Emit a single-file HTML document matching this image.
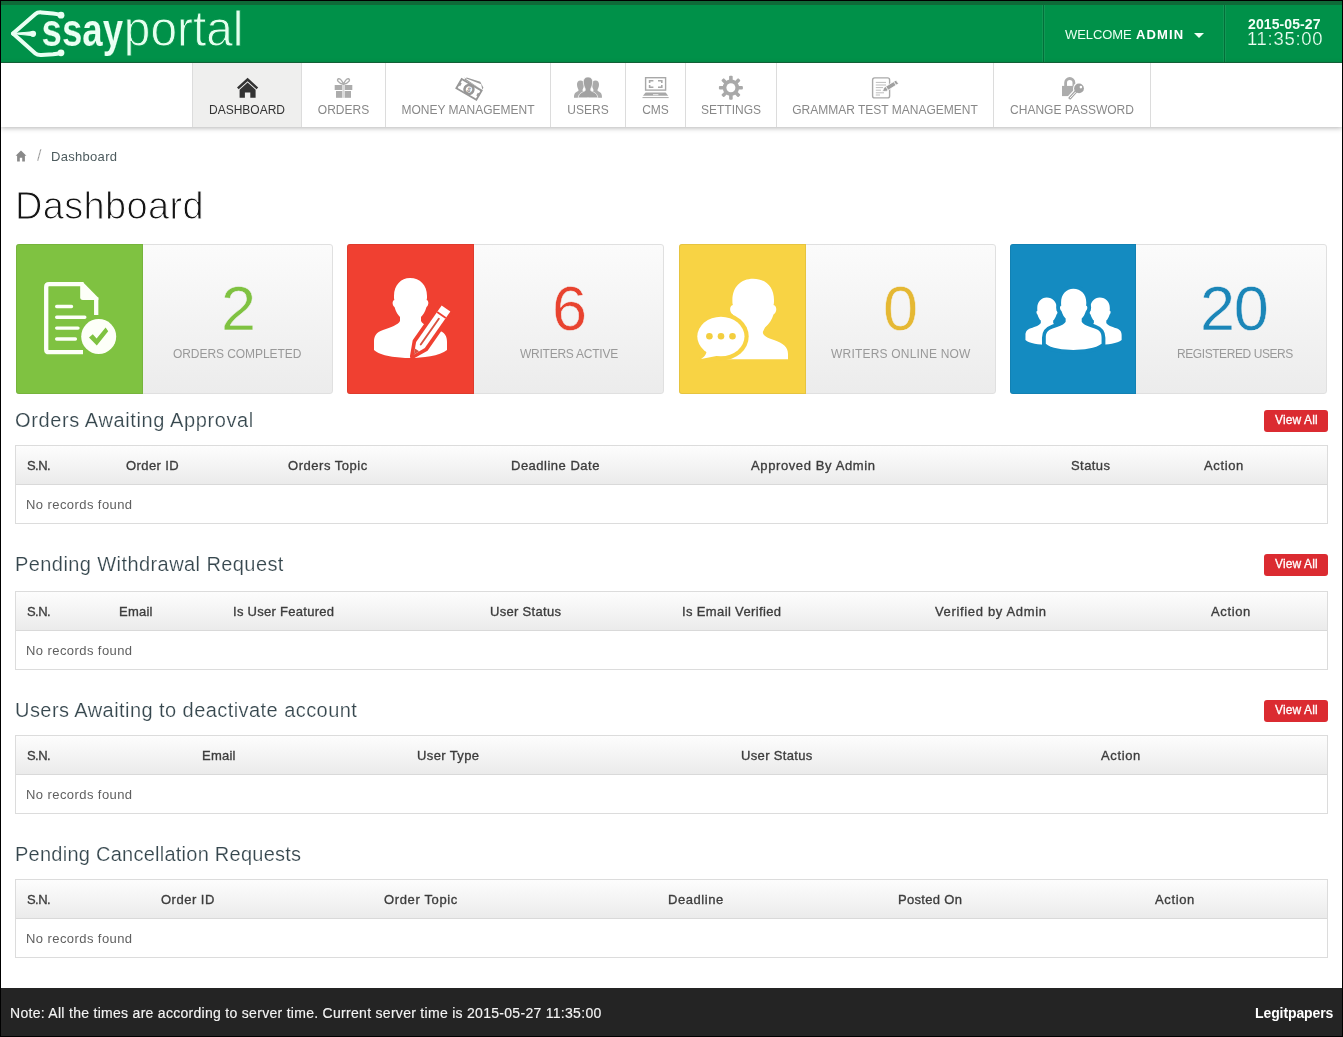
<!DOCTYPE html>
<html lang="en">
<head>
<meta charset="utf-8">
<title>Dashboard - Essay Portal</title>
<style>
html,body{margin:0;padding:0;}
body{width:1343px;height:1037px;position:relative;overflow:hidden;background:#fff;font-family:"Liberation Sans",sans-serif;}
.abs,.t,svg.i{position:absolute;}
.t{white-space:pre;line-height:1;will-change:transform;font-family:"Liberation Sans",sans-serif;}
#frame{left:0;top:0;width:1341px;height:1035px;border:1px solid #000;z-index:50;pointer-events:none;}
#hdr{left:1px;top:1px;width:1341px;height:57px;background:#009149;border-top:4px solid #0f6a38;border-bottom:1px solid #15683c;}
.vsep{top:5px;width:1px;height:57px;background:#02703a;box-shadow:1px 0 0 rgba(255,255,255,.07),-1px 0 0 rgba(255,255,255,.07);}
#nav{left:1px;top:63px;width:1341px;height:64px;background:#fff;box-shadow:0 1px 5px rgba(0,0,0,.3);}
.tab{top:63px;height:64px;border-right:1px solid #dcdcdc;box-sizing:border-box;text-align:center;font-size:12px;line-height:14px;color:#888;}
.tab span{position:absolute;left:0;right:0;top:40px;will-change:transform;}
.tab.on{background:#efefee;color:#333;border-left:1px solid #dcdcdc;}
.card{top:243.5px;width:315px;height:148.5px;border:1px solid #e0e0e0;border-radius:3px;background:linear-gradient(#fbfbfb,#ececec);}
.card i{position:absolute;left:-1px;top:-1px;width:127px;height:150.5px;display:block;border-radius:3px 0 0 3px;box-shadow:inset 0 0 0 1px rgba(0,0,0,.07);}
.btn{left:1264px;width:63.5px;height:22px;border-radius:3px;background:#db2b31;}
.tbl{left:15px;width:1311px;height:77px;border:1px solid #dcdcdc;background:#fff;}
.tbl b{display:block;height:38px;border-bottom:1px solid #d9d9d9;background:linear-gradient(#fdfdfd,#ebebeb);}
#ftr{left:1px;top:988px;width:1341px;height:48px;background:#242424;}
</style>
</head>
<body>
<div id="hdr" class="abs"></div>
<div class="abs vsep" style="left:1043px"></div>
<div class="abs vsep" style="left:1224px"></div>

<!-- logo -->
<svg class="i" style="left:0;top:0;will-change:transform" width="260" height="62" viewBox="0 0 260 62">
  <g fill="none" stroke="#eafff3" stroke-width="4" stroke-linecap="round" stroke-linejoin="round">
    <path d="M13 33.6 L35.4 14 Q37.6 12.1 41.5 12.4 L53 13.4 Q57.5 13.8 60.5 15.2"/>
    <path d="M13 33.6 L35.4 53.4 Q37.6 55.3 41.5 55 L53 54.3 Q57.5 53.9 60.5 52.8"/>
  </g>
  <path d="M12 33.6 L32 31.8 L32 35.6 Z" fill="#eafff3" stroke="#eafff3" stroke-width="1" stroke-linejoin="round"/>
  <circle cx="61" cy="15.2" r="3.4" fill="#eafff3"/>
  <circle cx="61" cy="52.8" r="3.4" fill="#eafff3"/>
  <circle cx="33" cy="33.8" r="3.1" fill="#eafff3"/>
  <text transform="translate(41.6 45.8) scale(.797 1)" font-family="Liberation Sans, sans-serif" font-weight="700" font-size="46" fill="#eafff3" stroke="#009149" stroke-width=".15">ssay</text>
  <text transform="translate(123.8 45.8) scale(.956 1)" font-family="Liberation Sans, sans-serif" font-weight="400" font-size="50" fill="#e4ffee" stroke="#009149" stroke-width=".9">portal</text>
</svg>
<!-- caret -->
<svg class="i" style="left:1194px;top:33px" width="10" height="5" viewBox="0 0 10 5"><path d="M0 0H10L5 5Z" fill="#f0fff6"/></svg>

<div id="nav" class="abs"></div>
<div class="abs tab on" style="left:192px;width:110px"><span>DASHBOARD</span></div>
<div class="abs tab" style="left:302px;width:84px"><span>ORDERS</span></div>
<div class="abs tab" style="left:386px;width:165px"><span>MONEY MANAGEMENT</span></div>
<div class="abs tab" style="left:551px;width:75px"><span>USERS</span></div>
<div class="abs tab" style="left:626px;width:60px"><span>CMS</span></div>
<div class="abs tab" style="left:686px;width:91px"><span>SETTINGS</span></div>
<div class="abs tab" style="left:777px;width:217px"><span>GRAMMAR TEST MANAGEMENT</span></div>
<div class="abs tab" style="left:994px;width:157px"><span>CHANGE PASSWORD</span></div>
<!-- nav icons -->
<svg class="i" style="left:236px;top:77px" width="24" height="22" viewBox="0 0 24 22"><g fill="#333"><path d="M11.6 .8 L22.2 10.4 L20.5 12.2 L11.6 4.2 L2.7 12.2 L1 10.4 Z"/><path d="M11.6 5.6 L19.6 12.8 V20.8 H14.3 V15.4 H8.9 V20.8 H3.6 V12.8 Z"/></g></svg>
<svg class="i" style="left:334px;top:77px" width="19" height="22" viewBox="0 0 19 22"><g fill="#acacac"><rect x=".7" y="8" width="7.7" height="5"/><rect x="10.6" y="8" width="7.7" height="5"/><rect x="2" y="14" width="6.4" height="6.8"/><rect x="10.6" y="14" width="6.4" height="6.8"/></g><rect x="8.6" y="8" width="1.8" height="12.8" fill="#d9d9d9"/><path d="M9.5 7.4 C8.6 4.4 6.4 1.4 4.6 1.8 C2.4 2.4 3.4 5.8 9.5 7.4 C15.6 5.8 16.6 2.4 14.4 1.8 C12.6 1.4 10.4 4.4 9.5 7.4 Z" fill="none" stroke="#acacac" stroke-width="1.4" stroke-linejoin="round"/></svg>
<svg class="i" style="left:454px;top:75px" width="30" height="27" viewBox="0 0 30 27"><g transform="translate(15 14.4) rotate(30)"><path d="M-10.5 -7.6 L8 -10.6 L12 -6 Z M-9 -6.2 H11.5 L11.7 -8.6 L6 -12.2 L-8 -9.2Z" fill="#9a9a9a"/><rect x="-11.5" y="-5.3" width="23" height="10.6" fill="#fff" stroke="#979797" stroke-width="1.9"/><rect x="-11.7" y="-1.6" width="2.4" height="3.2" fill="#9a9a9a"/><rect x="9.3" y="-1.6" width="2.4" height="3.2" fill="#9a9a9a"/><circle r="4.4" fill="#fff" stroke="#979797" stroke-width="2.6"/><text x="-1.7" y="2.4" font-family="Liberation Sans, sans-serif" font-weight="700" font-size="6.6" fill="#9a9a9a">$</text></g></svg>
<svg class="i" style="left:573px;top:76px" width="30" height="23" viewBox="0 0 30 23"><g fill="#ababab"><path d="M7.5 4.5 C10 4.5 11.2 6.5 11 9 C10.8 11.5 9.8 12.8 9.6 13.6 L9.6 15 C11 16 13 16.4 14 17.2 V21.8 H1 C1 18 1.6 16.6 5.4 15 L5.4 13.6 C5.2 12.8 4.2 11.5 4 9 C3.8 6.5 5 4.5 7.5 4.5Z"/><path d="M22.5 4.5 C25 4.5 26.2 6.5 26 9 C25.8 11.5 24.8 12.8 24.6 13.6 L24.6 15 C28.4 16.6 29 18 29 21.8 H16 V17.2 C17 16.4 19 16 20.4 15 L20.4 13.6 C20.2 12.8 19.2 11.5 19 9 C18.8 6.5 20 4.5 22.5 4.5Z"/></g><path d="M15 1 C18.4 1 19.9 3.6 19.6 7 C19.3 10.2 18.1 11.8 17.8 12.8 L17.8 14.6 C19.5 16 24.3 16.6 24.8 21.8 H5.2 C5.7 16.6 10.5 16 12.2 14.6 L12.2 12.8 C11.9 11.8 10.7 10.2 10.4 7 C10.1 3.6 11.6 1 15 1Z" fill="#a2a2a2" stroke="#fff" stroke-width=".7"/></svg>
<svg class="i" style="left:641px;top:76px" width="29" height="23" viewBox="0 0 29 23"><g fill="none" stroke="#a8a8a8"><rect x="4.6" y="1.7" width="20" height="12.4" stroke-width="1.4"/><path d="M8.6 7 V4.8 H12.4 M17 4.8 H20.8 V7 M20.8 9 V11.2 H17 M12.4 11.2 H8.6 V9" stroke-width="1.6"/><path d="M1.5 21.6 H27.7" stroke-width="1"/></g><path d="M4.6 16.6 H24.6 L27.2 19.8 H2 Z" fill="#a8a8a8"/><rect x="12" y="18.2" width="5.4" height="1" fill="#eee"/></svg>
<svg class="i" style="left:718px;top:75px" width="26" height="26" viewBox="0 0 26 26"><g transform="translate(12.9 12.7)"><g fill="#a9a9a9"><rect x="-1.8" y="-12" width="3.6" height="24" rx="1"/><rect x="-1.8" y="-12" width="3.6" height="24" rx="1" transform="rotate(45)"/><rect x="-1.8" y="-12" width="3.6" height="24" rx="1" transform="rotate(90)"/><rect x="-1.8" y="-12" width="3.6" height="24" rx="1" transform="rotate(135)"/><circle r="8.2"/></g><circle r="4.5" fill="#fff"/></g></svg>
<svg class="i" style="left:870px;top:76px" width="32" height="24" viewBox="0 0 32 24"><rect x="2.6" y="1.9" width="17" height="20" rx="2" fill="none" stroke="#a9a9a9" stroke-width="1.4"/><g stroke="#bdbdbd" stroke-width="1"><path d="M5.8 6.4 H16 M5.8 9 H16 M5.8 11.6 H13 M5.8 14.2 H11 M5.8 16.8 H14 M5.8 19 H10"/></g><path d="M12.4 15.6 L14 11.5 L26 4.2 L28.6 7.6 L16.6 15.2 Z" fill="#a0a0a0" stroke="#fff" stroke-width=".8"/><path d="M15.6 10.4 L18.2 14.2 M23.6 5.6 L26.2 9.2" stroke="#fff" stroke-width=".9"/></svg>
<svg class="i" style="left:1060px;top:76px" width="28" height="24" viewBox="0 0 28 24"><path d="M5.6 10.5 V6.65 A4.15 4.15 0 0 1 13.9 6.65 V10.5" fill="none" stroke="#acacac" stroke-width="2.8"/><rect x="2" y="9.9" width="13" height="10.2" fill="#acacac"/><path d="M16.6 14.8 L9.6 22.4" stroke="#fff" stroke-width="5.4" stroke-linecap="round"/><circle cx="19" cy="12.4" r="6" fill="#fff"/><path d="M16.6 14.8 L10 22" stroke="#a4a4a4" stroke-width="3" stroke-linecap="round"/><path d="M15.8 15.8 L10.2 21.8" stroke="#fff" stroke-width="1" stroke-linecap="round"/><circle cx="19" cy="12.4" r="4.9" fill="#a4a4a4"/><circle cx="20.9" cy="11.1" r="1.3" fill="#fff"/></svg>


<!-- breadcrumb home -->
<svg class="i" style="left:15px;top:150px" width="12" height="12" viewBox="0 0 12 12"><path d="M6 .6 L11.4 5.8 H9.9 V11.4 H7.2 V7.8 H4.8 V11.4 H2.1 V5.8 H.6 Z" fill="#8a8a8a"/></svg>

<!-- cards -->
<div class="abs card" style="left:16px"><i style="background:#7fc241"></i></div>
<div class="abs card" style="left:347px"><i style="background:#f04031"></i></div>
<div class="abs card" style="left:678.5px"><i style="background:#f8d344"></i></div>
<div class="abs card" style="left:1010px"><i style="background:#148bc1;width:126px"></i></div>
<!-- card icons -->
<svg class="i" style="left:30px;top:270px" width="100" height="100" viewBox="0 0 100 100">
  <path d="M53.5 14.2 H19 Q16.2 14.2 16.2 17 V79.4 Q16.2 82.2 19 82.2 H53 M66.2 45 V27.5" fill="none" stroke="#fdfff8" stroke-width="4.3" stroke-linecap="butt"/>
  <path d="M50.2 12.1 H52.8 L68.3 27.8 V30 H52.9 Q50.2 30 50.2 27.3 Z" fill="#fdfff8"/>
  <g stroke="#fdfff8" stroke-width="3.4" stroke-linecap="round"><path d="M26.7 36.5 H41.5 M26.7 47.3 H54.8 M26.7 58.1 H48 M26.7 69 H45.4"/></g>
  <circle cx="68.7" cy="66.5" r="19.6" fill="#7fc241"/>
  <circle cx="68.7" cy="66.5" r="17.5" fill="#fdfff8"/>
  <path d="M59 67.5 L62.8 64.2 L66.6 68.6 L75.6 57.4 L78.2 61.2 L66.8 75.4 Z" fill="#7fc241"/>
</svg>
<svg class="i" style="left:360px;top:270px" width="100" height="100" viewBox="0 0 100 100">
  <path d="M50 8 C60 8 67 15 67 26 C67 28 67 29.5 66.5 30 C69 30.5 69 35 66.5 37 C65 42 63 45 61 47 L61 51 C63 55 70 57 78 60 C85 62.5 87 66 87 72 L87 80 C80 86 62 88 50 88 C38 88 20 86 14 80 L14 72 C14 66 16 62.5 23 60 C31 57 38 55 40 51 L40 47 C38 45 36 42 34.5 37 C32 35 32 30.5 34.5 30 C34 29.5 34 28 34 26 C34 15 41 8 50 8 Z" fill="#fff"/>
  <g transform="translate(68.5 63.5) rotate(35)">
    <path d="M-6.6 -28.5 H6.6 V14 L0 28 L-6.6 14 Z" fill="#fff" stroke="#f04031" stroke-width="5" stroke-linejoin="round"/>
    <path d="M-5.3 -30.5 H5.3 V14 L0 25.5 L-5.3 14 Z" fill="#fff"/>
    <path d="M-5.3 -22.6 H5.3" stroke="#f04031" stroke-width="1.8"/>
    <path d="M0 -18 V13.5" stroke="#d9513f" stroke-width="1.9" stroke-linecap="round"/>
    <path d="M-2.6 20 L0 25.5 L2.6 20 Z" fill="#d9513f"/>
  </g>
</svg>
<svg class="i" style="left:690px;top:270px" width="100" height="100" viewBox="0 0 100 100">
  <path d="M63.2 8.7 C75.5 8.7 84 17 84 30 C84 32 84 34 83.5 35 C87.2 35.5 87.2 42.5 83.5 44.5 C82 50 79 54 75 57.5 L72.8 62 C73 66 78 68 84 70 C93 73 98 77 98 84 L98 89.2 L28.4 89.2 L28.4 84 C28.4 77 33.4 73 42.4 70 C48.4 68 53.4 66 53.6 62 L51.4 57.5 C47.4 54 44.4 50 42.9 44.5 C39.2 42.5 39.2 35.5 42.9 35 C42.4 34 42.4 32 42.4 30 C42.4 17 50.9 8.7 63.2 8.7 Z" fill="#fff"/>
  <ellipse cx="30.9" cy="66.5" rx="27.8" ry="24" fill="#f8d344"/>
  <path d="M8 93 L13 76 L32 90 Z" fill="#f8d344"/>
  <ellipse cx="30.9" cy="66.5" rx="23.6" ry="19.8" fill="#fff"/>
  <path d="M11 89 C15 86.6 17 83.6 16.6 79 L29 85.6 C23 86.8 17 87.8 11 89 Z" fill="#fff"/>
  <g fill="#f3ce3f"><circle cx="19.4" cy="66.3" r="3.3"/><circle cx="31" cy="66.3" r="3.3"/><circle cx="42.5" cy="66.3" r="3.3"/></g>
</svg>
<svg class="i" style="left:1020px;top:270px" width="104" height="100" viewBox="0 0 104 100">
  
  <path d="M50 8 C60 8 67 15 67 26 C67 28 67 29.5 66.5 30 C69 30.5 69 35 66.5 37 C65 42 63 45 61 47 L61 51 C63 55 70 57 78 60 C85 62.5 87 66 87 72 L87 80 C80 86 62 88 50 88 C38 88 20 86 14 80 L14 72 C14 66 16 62.5 23 60 C31 57 38 55 40 51 L40 47 C38 45 36 42 34.5 37 C32 35 32 30.5 34.5 30 C34 29.5 34 28 34 26 C34 15 41 8 50 8 Z" transform="translate(-2.8 22.8) scale(.59)" fill="#fff"/>
  <path d="M50 8 C60 8 67 15 67 26 C67 28 67 29.5 66.5 30 C69 30.5 69 35 66.5 37 C65 42 63 45 61 47 L61 51 C63 55 70 57 78 60 C85 62.5 87 66 87 72 L87 80 C80 86 62 88 50 88 C38 88 20 86 14 80 L14 72 C14 66 16 62.5 23 60 C31 57 38 55 40 51 L40 47 C38 45 36 42 34.5 37 C32 35 32 30.5 34.5 30 C34 29.5 34 28 34 26 C34 15 41 8 50 8 Z" transform="translate(50.3 22.8) scale(.59)" fill="#fff"/>
  <path d="M50 8 C60 8 67 15 67 26 C67 28 67 29.5 66.5 30 C69 30.5 69 35 66.5 37 C65 42 63 45 61 47 L61 51 C63 55 70 57 78 60 C85 62.5 87 66 87 72 L87 80 C80 86 62 88 50 88 C38 88 20 86 14 80 L14 72 C14 66 16 62.5 23 60 C31 57 38 55 40 51 L40 47 C38 45 36 42 34.5 37 C32 35 32 30.5 34.5 30 C34 29.5 34 28 34 26 C34 15 41 8 50 8 Z" transform="translate(15.1 12.7) scale(.764)" fill="#fff" stroke="#148bc1" stroke-width="10" paint-order="stroke"/>
</svg>


<div class="abs btn" style="top:410px"></div>
<div class="abs btn" style="top:554px"></div>
<div class="abs btn" style="top:700px"></div>

<div class="abs tbl" style="top:445px"><b></b></div>
<div class="abs tbl" style="top:591px"><b></b></div>
<div class="abs tbl" style="top:735px"><b></b></div>
<div class="abs tbl" style="top:879px"><b></b></div>

<div id="ftr" class="abs"></div>

<span class="t" style="left:1064.9px;top:28.29px;font-size:13px;font-weight:400;color:#e9fff2;letter-spacing:-0.079px;">WELCOME</span>
<span class="t" style="left:1136.1px;top:28.29px;font-size:13px;font-weight:700;color:#ffffff;letter-spacing:1.123px;">ADMIN</span>
<span class="t" style="left:1248.0px;top:16.75px;font-size:14px;font-weight:700;color:#f2fff7;letter-spacing:0.097px;">2015-05-27</span>
<span class="t" style="left:1247.0px;top:29.94px;font-size:18.5px;font-weight:400;color:#effff5;letter-spacing:0.694px;-webkit-text-stroke:.22px #009149;">11:35:00</span>
<span class="t" style="left:36.6px;top:147.75px;font-size:16px;font-weight:400;color:#8a8a8a;-webkit-text-stroke:.3px #fff;">/</span>
<span class="t" style="left:50.7px;top:149.99px;font-size:13px;font-weight:400;color:#4d5b5e;letter-spacing:0.299px;">Dashboard</span>
<span class="t" style="left:15.2px;top:186.63px;font-size:38px;font-weight:400;color:#151515;letter-spacing:0.337px;-webkit-text-stroke:1.05px #fff;">Dashboard</span>
<span class="t" style="left:220.5px;top:277.46px;font-size:63px;font-weight:400;color:#7fc241;-webkit-text-stroke:.5px #f4f4f4;">2</span>
<span class="t" style="left:173.4px;top:347.64px;font-size:12px;font-weight:400;color:#999;letter-spacing:-0.064px;">ORDERS COMPLETED</span>
<span class="t" style="left:552.0px;top:277.46px;font-size:63px;font-weight:400;color:#e8432f;-webkit-text-stroke:.5px #f4f4f4;">6</span>
<span class="t" style="left:519.8px;top:347.64px;font-size:12px;font-weight:400;color:#999;letter-spacing:-0.242px;">WRITERS ACTIVE</span>
<span class="t" style="left:882.8px;top:277.46px;font-size:63px;font-weight:400;color:#e5b833;-webkit-text-stroke:.5px #f4f4f4;">0</span>
<span class="t" style="left:830.8px;top:347.64px;font-size:12px;font-weight:400;color:#999;letter-spacing:0.199px;">WRITERS ONLINE NOW</span>
<span class="t" style="left:1200.3px;top:277.46px;font-size:63px;font-weight:400;color:#1b86b8;letter-spacing:-1.178px;-webkit-text-stroke:.5px #f4f4f4;">20</span>
<span class="t" style="left:1176.9px;top:347.64px;font-size:12px;font-weight:400;color:#999;letter-spacing:-0.427px;">REGISTERED USERS</span>
<span class="t" style="left:14.9px;top:410.47px;font-size:20px;font-weight:400;color:#36474e;letter-spacing:0.609px;-webkit-text-stroke:.2px #fff;">Orders Awaiting Approval</span>
<span class="t" style="left:14.9px;top:553.87px;font-size:20px;font-weight:400;color:#36474e;letter-spacing:0.419px;-webkit-text-stroke:.2px #fff;">Pending Withdrawal Request</span>
<span class="t" style="left:14.9px;top:699.87px;font-size:20px;font-weight:400;color:#36474e;letter-spacing:0.438px;-webkit-text-stroke:.2px #fff;">Users Awaiting to deactivate account</span>
<span class="t" style="left:14.9px;top:844.07px;font-size:20px;font-weight:400;color:#36474e;letter-spacing:0.251px;-webkit-text-stroke:.2px #fff;">Pending Cancellation Requests</span>
<span class="t" style="left:1275.0px;top:414.14px;font-size:12px;font-weight:400;color:#fff;letter-spacing:0.127px;-webkit-text-stroke:.3px #fff;">View All</span>
<span class="t" style="left:1275.0px;top:558.14px;font-size:12px;font-weight:400;color:#fff;letter-spacing:0.127px;-webkit-text-stroke:.3px #fff;">View All</span>
<span class="t" style="left:1275.0px;top:704.14px;font-size:12px;font-weight:400;color:#fff;letter-spacing:0.127px;-webkit-text-stroke:.3px #fff;">View All</span>
<span class="t" style="left:26.5px;top:458.79px;font-size:13px;font-weight:400;color:#3d3d3d;letter-spacing:-0.566px;-webkit-text-stroke:.33px #3d3d3d;">S.N.</span>
<span class="t" style="left:125.6px;top:458.79px;font-size:13px;font-weight:400;color:#3d3d3d;letter-spacing:0.408px;-webkit-text-stroke:.33px #3d3d3d;">Order ID</span>
<span class="t" style="left:288.4px;top:458.79px;font-size:13px;font-weight:400;color:#3d3d3d;letter-spacing:0.530px;-webkit-text-stroke:.33px #3d3d3d;">Orders Topic</span>
<span class="t" style="left:511.3px;top:458.79px;font-size:13px;font-weight:400;color:#3d3d3d;letter-spacing:0.501px;-webkit-text-stroke:.33px #3d3d3d;">Deadline Date</span>
<span class="t" style="left:750.7px;top:458.79px;font-size:13px;font-weight:400;color:#3d3d3d;letter-spacing:0.613px;-webkit-text-stroke:.33px #3d3d3d;">Approved By Admin</span>
<span class="t" style="left:1071.0px;top:458.79px;font-size:13px;font-weight:400;color:#3d3d3d;letter-spacing:0.428px;-webkit-text-stroke:.33px #3d3d3d;">Status</span>
<span class="t" style="left:1204.0px;top:458.79px;font-size:13px;font-weight:400;color:#3d3d3d;letter-spacing:0.632px;-webkit-text-stroke:.33px #3d3d3d;">Action</span>
<span class="t" style="left:26.5px;top:604.79px;font-size:13px;font-weight:400;color:#3d3d3d;letter-spacing:-0.566px;-webkit-text-stroke:.33px #3d3d3d;">S.N.</span>
<span class="t" style="left:119.3px;top:604.79px;font-size:13px;font-weight:400;color:#3d3d3d;letter-spacing:0.221px;-webkit-text-stroke:.33px #3d3d3d;">Email</span>
<span class="t" style="left:233.3px;top:604.79px;font-size:13px;font-weight:400;color:#3d3d3d;letter-spacing:0.278px;-webkit-text-stroke:.33px #3d3d3d;">Is User Featured</span>
<span class="t" style="left:490.3px;top:604.79px;font-size:13px;font-weight:400;color:#3d3d3d;letter-spacing:0.308px;-webkit-text-stroke:.33px #3d3d3d;">User Status</span>
<span class="t" style="left:682.3px;top:604.79px;font-size:13px;font-weight:400;color:#3d3d3d;letter-spacing:0.362px;-webkit-text-stroke:.33px #3d3d3d;">Is Email Verified</span>
<span class="t" style="left:935.0px;top:604.79px;font-size:13px;font-weight:400;color:#3d3d3d;letter-spacing:0.659px;-webkit-text-stroke:.33px #3d3d3d;">Verified by Admin</span>
<span class="t" style="left:1211.0px;top:604.79px;font-size:13px;font-weight:400;color:#3d3d3d;letter-spacing:0.632px;-webkit-text-stroke:.33px #3d3d3d;">Action</span>
<span class="t" style="left:26.5px;top:748.79px;font-size:13px;font-weight:400;color:#3d3d3d;letter-spacing:-0.566px;-webkit-text-stroke:.33px #3d3d3d;">S.N.</span>
<span class="t" style="left:202.3px;top:748.79px;font-size:13px;font-weight:400;color:#3d3d3d;letter-spacing:0.221px;-webkit-text-stroke:.33px #3d3d3d;">Email</span>
<span class="t" style="left:417.3px;top:748.79px;font-size:13px;font-weight:400;color:#3d3d3d;letter-spacing:0.373px;-webkit-text-stroke:.33px #3d3d3d;">User Type</span>
<span class="t" style="left:741.0px;top:748.79px;font-size:13px;font-weight:400;color:#3d3d3d;letter-spacing:0.338px;-webkit-text-stroke:.33px #3d3d3d;">User Status</span>
<span class="t" style="left:1101.0px;top:748.79px;font-size:13px;font-weight:400;color:#3d3d3d;letter-spacing:0.632px;-webkit-text-stroke:.33px #3d3d3d;">Action</span>
<span class="t" style="left:26.5px;top:892.79px;font-size:13px;font-weight:400;color:#3d3d3d;letter-spacing:-0.566px;-webkit-text-stroke:.33px #3d3d3d;">S.N.</span>
<span class="t" style="left:161.0px;top:892.79px;font-size:13px;font-weight:400;color:#3d3d3d;letter-spacing:0.494px;-webkit-text-stroke:.33px #3d3d3d;">Order ID</span>
<span class="t" style="left:384.0px;top:892.79px;font-size:13px;font-weight:400;color:#3d3d3d;letter-spacing:0.633px;-webkit-text-stroke:.33px #3d3d3d;">Order Topic</span>
<span class="t" style="left:668.0px;top:892.79px;font-size:13px;font-weight:400;color:#3d3d3d;letter-spacing:0.567px;-webkit-text-stroke:.33px #3d3d3d;">Deadline</span>
<span class="t" style="left:898.3px;top:892.79px;font-size:13px;font-weight:400;color:#3d3d3d;letter-spacing:0.320px;-webkit-text-stroke:.33px #3d3d3d;">Posted On</span>
<span class="t" style="left:1155.0px;top:892.79px;font-size:13px;font-weight:400;color:#3d3d3d;letter-spacing:0.632px;-webkit-text-stroke:.33px #3d3d3d;">Action</span>
<span class="t" style="left:26.4px;top:497.59px;font-size:13px;font-weight:400;color:#606060;letter-spacing:0.424px;">No records found</span>
<span class="t" style="left:26.4px;top:643.59px;font-size:13px;font-weight:400;color:#606060;letter-spacing:0.424px;">No records found</span>
<span class="t" style="left:26.4px;top:787.59px;font-size:13px;font-weight:400;color:#606060;letter-spacing:0.424px;">No records found</span>
<span class="t" style="left:26.4px;top:931.59px;font-size:13px;font-weight:400;color:#606060;letter-spacing:0.424px;">No records found</span>
<span class="t" style="left:10.3px;top:1006.15px;font-size:14px;font-weight:400;color:#f4f4f4;letter-spacing:0.292px;-webkit-text-stroke:.15px #f4f4f4;">Note: All the times are according to server time. Current server time is 2015-05-27 11:35:00</span>
<span class="t" style="left:1254.6px;top:1005.95px;font-size:14px;font-weight:700;color:#fff;letter-spacing:-0.096px;">Legitpapers</span>
<div id="frame" class="abs"></div>
</body>
</html>
